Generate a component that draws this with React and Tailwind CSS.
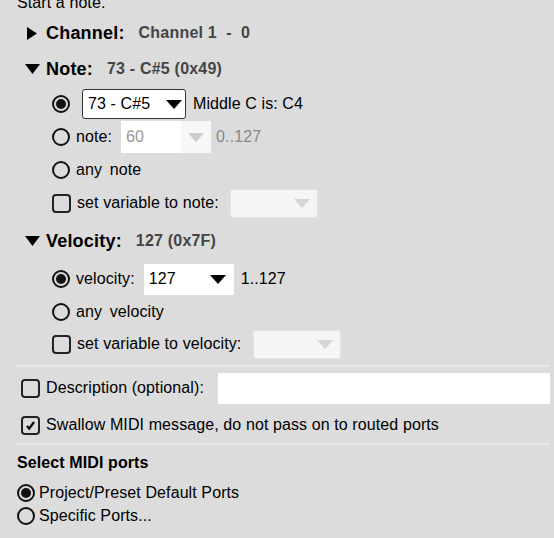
import React from "react";

const Radio = ({ checked }) => (
  <span className="w-[18px] h-[18px] rounded-full border-2 border-[#111] flex items-center justify-center shrink-0 bg-transparent">
    {checked && <span className="w-[10px] h-[10px] rounded-full bg-[#111]" />}
  </span>
);

const Check = ({ checked }) => (
  <span className="w-[19px] h-[19px] rounded-[4px] border-2 border-[#222] flex items-center justify-center shrink-0">
    {checked && (
      <svg width="11" height="11" viewBox="0 0 11 11">
        <path d="M2 6 L4.2 8.6 L9 2" stroke="#111" strokeWidth="2.4" fill="none" />
      </svg>
    )}
  </span>
);

const Arrow = ({ color = "#000" }) => (
  <svg width="16" height="9" viewBox="0 0 16 9">
    <path d="M0 0 H16 L8 9 Z" fill={color} />
  </svg>
);

const TriRight = () => (
  <svg width="10" height="13" viewBox="0 0 10 13" className="shrink-0">
    <path d="M0 0 L10 6.5 L0 13 Z" fill="#000" />
  </svg>
);

const TriDown = () => (
  <svg width="15" height="10" viewBox="0 0 15 10" className="shrink-0">
    <path d="M0 0 H15 L7.5 10 Z" fill="#000" />
  </svg>
);

const Section = ({ open, title, value }) => (
  <div className="flex items-center h-[36px] pl-[18px]">
    <span className="w-[28px] flex justify-center">{open ? <TriDown /> : <TriRight />}</span>
    <span className="text-[18px] font-bold text-black tracking-[0.2px]">{title}</span>
    <span className="text-[16px] font-bold text-[#444] ml-[14px] whitespace-pre tracking-[0.2px]">{value}</span>
  </div>
);

export default function App() {
  return (
    <div
      className="w-[554px] h-[538px] overflow-hidden bg-[#dcdcdc] text-[16px] text-black tracking-[0.1px]"
      style={{ fontFamily: '"Liberation Sans", Arial, sans-serif' }}
    >
      <div className="flex flex-col w-[550px] h-full">
        <div className="h-[15px] pl-[17px] leading-[6px] overflow-hidden">Start a note.</div>

        <Section open={false} title="Channel:" value={"Channel 1  -  0"} />
        <Section open title="Note:" value="73 - C#5 (0x49)" />

        <div className="flex items-center h-[34px] pl-[52px]">
          <Radio checked />
          <div className="flex items-center justify-between ml-[12px] w-[104px] h-[30px] bg-white border border-[#333] rounded-[3px] pl-[5px] pr-[3px]">
            <span>73 - C#5</span>
            <Arrow />
          </div>
          <span className="ml-[7px]">Middle C is: C4</span>
        </div>

        <div className="flex items-center h-[32px] pl-[52px]">
          <Radio />
          <span className="ml-[6px]">note:</span>
          <div className="flex items-center ml-[9px] w-[90px] h-[32px] bg-white">
            <span className="w-[60px] pl-[5px] text-[#999]">60</span>
            <span className="w-[30px] h-full bg-[#f7f7f7] flex items-center justify-center">
              <Arrow color="#ccc" />
            </span>
          </div>
          <span className="ml-[5px] text-[#888]">0..127</span>
        </div>

        <div className="flex items-center h-[34px] pl-[52px]">
          <Radio />
          <span className="ml-[6px] [word-spacing:3px]">any note</span>
        </div>

        <div className="flex items-center h-[32px] pl-[52px]">
          <Check />
          <span className="ml-[6px]">set variable to note:</span>
          <div className="ml-[11px] w-[88px] h-[29px] bg-[#f5f5f5] border border-[#e4e4e4] rounded-[3px] flex items-center justify-end pr-[7px]">
            <Arrow color="#d6d6d6" />
          </div>
        </div>

        <div className="pt-[4px]">
          <Section open title="Velocity:" value="127 (0x7F)" />
        </div>

        <div className="flex items-center h-[34px] pl-[52px] mt-[3px]">
          <Radio checked />
          <span className="ml-[6px]">velocity:</span>
          <div className="flex items-center justify-between ml-[9px] w-[90px] h-[31px] bg-white pl-[5px] pr-[8px]">
            <span>127</span>
            <Arrow />
          </div>
          <span className="ml-[7px]">1..127</span>
        </div>

        <div className="flex items-center h-[32px] pl-[52px]">
          <Radio />
          <span className="ml-[6px] [word-spacing:3px]">any velocity</span>
        </div>

        <div className="flex items-center h-[32px] pl-[52px]">
          <Check />
          <span className="ml-[6px]">set variable to velocity:</span>
          <div className="ml-[12px] w-[88px] h-[29px] bg-[#f5f5f5] border border-[#e4e4e4] rounded-[3px] flex items-center justify-end pr-[7px]">
            <Arrow color="#d6d6d6" />
          </div>
        </div>

        <div className="ml-[16px] mt-[5px] h-[2px] bg-[#e8e8e8]" />

        <div className="flex items-center h-[34px] pl-[21px] mt-[4px]">
          <Check />
          <span className="ml-[6px]">Description (optional):</span>
          <div className="ml-[14px] flex-1 h-[31px] bg-white" />
        </div>

        <div className="flex items-center h-[34px] pl-[21px] mt-[3px]">
          <Check checked />
          <span className="ml-[6px]">Swallow MIDI message, do not pass on to routed ports</span>
        </div>

        <div className="ml-[16px] mt-[1px] h-[2px] bg-[#e8e8e8]" />

        <div className="h-[34px] flex items-center pl-[17px] pt-[2px] text-[16px] font-bold">Select MIDI ports</div>

        <div className="flex items-center h-[24px] pl-[17px] mt-[2px]">
          <Radio checked />
          <span className="ml-[4px]">Project/Preset Default Ports</span>
        </div>
        <div className="flex items-center h-[22px] pl-[17px]">
          <Radio />
          <span className="ml-[4px]">Specific Ports...</span>
        </div>
      </div>
    </div>
  );
}
